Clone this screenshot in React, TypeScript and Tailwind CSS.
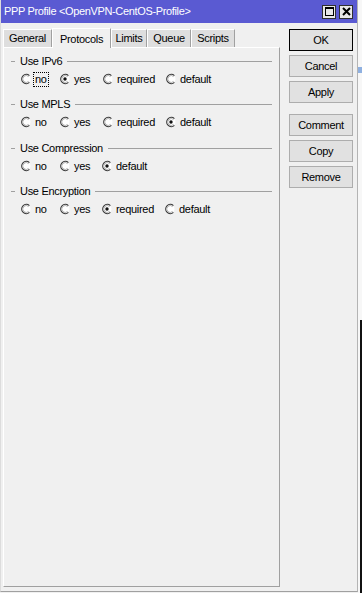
import React from 'react'

type Opt = { label: string; w?: string; checked?: boolean; focus?: boolean }

function Radio({ checked }: { checked?: boolean }) {
  return (
    <svg width="12" height="12" viewBox="0 0 12 12" className="shrink-0">
      <circle cx="6" cy="6" r="4.5" fill="#ffffff" />
      <path d="M9.4 2.6 A4.6 4.6 0 1 0 9.4 9.4" fill="none" stroke="#3c3c3c" strokeWidth="1.2" />
      <path d="M8.6 3.6 A3.4 3.4 0 1 0 8.6 8.4" fill="none" stroke="#a0a0a0" strokeWidth="0.8" />
      {checked && <circle cx="6" cy="6" r="1.7" fill="#111111" />}
    </svg>
  )
}

function Group({ title, options, gap = 'mb-[10px]' }: { title: string; options: Opt[]; gap?: string }) {
  return (
    <div className={gap}>
      <div className="flex items-center h-[14px]">
        <div className="ml-[7px] w-[4px] h-px bg-[#a0a0a0]" />
        <span className="ml-[5px]">{title}</span>
        <div className="ml-[5px] mr-[7px] flex-1 h-px bg-[#a0a0a0]" />
      </div>
      <div className="flex items-center h-[16px] mt-[3px] pl-[16px]">
        {options.map((o) => (
          <div key={o.label} className={`flex items-center ${o.w ?? ''}`}>
            <Radio checked={o.checked} />
            {o.focus ? (
              <span className="ml-px px-px leading-[13px] border border-dotted border-black">{o.label}</span>
            ) : (
              <span className="ml-[3px]">{o.label}</span>
            )}
          </div>
        ))}
      </div>
    </div>
  )
}

const tabs = [
  { label: 'General', w: 'w-[49px]' },
  { label: 'Protocols', w: 'w-[59px]', active: true },
  { label: 'Limits', w: 'w-[36px]' },
  { label: 'Queue', w: 'w-[44px]' },
  { label: 'Scripts', w: 'w-[44px]' },
]

function Btn({ label, primary, className = '' }: { label: string; primary?: boolean; className?: string }) {
  return (
    <div
      className={`h-[22px] w-[64px] flex items-center justify-center bg-[#e1e1e1] border ${
        primary ? 'border-black' : 'border-[#adadad]'
      } ${className}`}
    >
      {label}
    </div>
  )
}

export default function App() {
  return (
    <div className="w-[362px] h-[593px] flex overflow-hidden bg-[#f0f0f0] text-[11px] tracking-[-0.3px] text-black font-[family-name:'Liberation_Sans',Arial,sans-serif]">
      {/* dialog window */}
      <div className="w-[358px] h-[592px] flex flex-col bg-[#f0f0f0] border-l border-[#dcdcdc] border-r border-r-[#b4b4b4] border-b border-b-[#a0a0a0]">
        {/* title bar */}
        <div className="h-[23px] shrink-0 flex items-center bg-[#5a5ad2] text-white pl-[3px] pr-[4px]">
          <span className="flex-1 text-[11px] tracking-[-0.35px]">PPP Profile &lt;OpenVPN-CentOS-Profile&gt;</span>
          <div className="flex gap-[3px]">
            <div className="w-[14px] h-[14px] bg-[#e8e8e8] border border-[#303030] flex items-center justify-center">
              <div className="w-[9px] h-[9px] border border-black border-t-2" />
            </div>
            <div className="w-[14px] h-[14px] bg-[#e8e8e8] border border-[#303030] flex items-center justify-center">
              <svg width="9" height="9" viewBox="0 0 9 9">
                <path d="M1 1 L8 8 M8 1 L1 8" stroke="#000" strokeWidth="2" />
              </svg>
            </div>
          </div>
        </div>

        <div className="flex flex-1">
          {/* tabs + panel */}
          <div className="w-[280px] pl-[2px] flex flex-col">
            <div className="h-[24px] flex items-end">
              {tabs.map((t) =>
                t.active ? (
                  <div
                    key={t.label}
                    className={`${t.w} h-[20px] -mb-px relative z-10 flex items-start justify-center pt-[2px] bg-[#f0f0f0] border-t border-l border-white border-r border-r-[#a0a0a0]`}
                  >
                    {t.label}
                  </div>
                ) : (
                  <div
                    key={t.label}
                    className={`${t.w} h-[18px] flex items-center justify-center bg-[#dedede] border-t border-l border-white border-r border-r-[#a0a0a0]`}
                  >
                    {t.label}
                  </div>
                )
              )}
            </div>
            <div className="w-[277px] h-[540px] pt-[6px] border-t border-l border-white border-r border-r-[#a0a0a0] border-b border-b-[#a0a0a0]">
              <Group
                title="Use IPv6"
                options={[
                  { label: 'no', w: 'w-[39px]', focus: true },
                  { label: 'yes', w: 'w-[43px]', checked: true },
                  { label: 'required', w: 'w-[63px]' },
                  { label: 'default' },
                ]}
              />
              <Group
                title="Use MPLS"
                gap="mb-[11px]"
                options={[
                  { label: 'no', w: 'w-[39px]' },
                  { label: 'yes', w: 'w-[43px]' },
                  { label: 'required', w: 'w-[63px]' },
                  { label: 'default', checked: true },
                ]}
              />
              <Group
                title="Use Compression"
                options={[
                  { label: 'no', w: 'w-[39px]' },
                  { label: 'yes', w: 'w-[42px]' },
                  { label: 'default', checked: true },
                ]}
              />
              <Group
                title="Use Encryption"
                options={[
                  { label: 'no', w: 'w-[39px]' },
                  { label: 'yes', w: 'w-[42px]' },
                  { label: 'required', w: 'w-[63px]', checked: true },
                  { label: 'default' },
                ]}
              />
            </div>
          </div>

          {/* buttons */}
          <div className="ml-[8px] pt-[6px] flex flex-col gap-[4px]">
            <Btn label="OK" primary />
            <Btn label="Cancel" />
            <Btn label="Apply" />
            <Btn label="Comment" className="mt-[7px]" />
            <Btn label="Copy" />
            <Btn label="Remove" />
          </div>
        </div>
      </div>

      {/* sliver of the window behind */}
      <div className="w-[4px] h-full flex flex-col bg-[#f7f7f7]">
        <div className="h-[67px]" />
        <div className="h-[6px] bg-[#8fb0e0]" />
        <div className="h-[247px]" />
        <div className="flex-1 ml-[2px] border-l-2 border-t border-[#111111] flex flex-col">
          <div className="h-[133px] border-b border-[#111111]" />
          <div className="h-[29px]" />
          <div className="h-[14px] bg-[#7a9fd8]" />
        </div>
      </div>
    </div>
  )
}
